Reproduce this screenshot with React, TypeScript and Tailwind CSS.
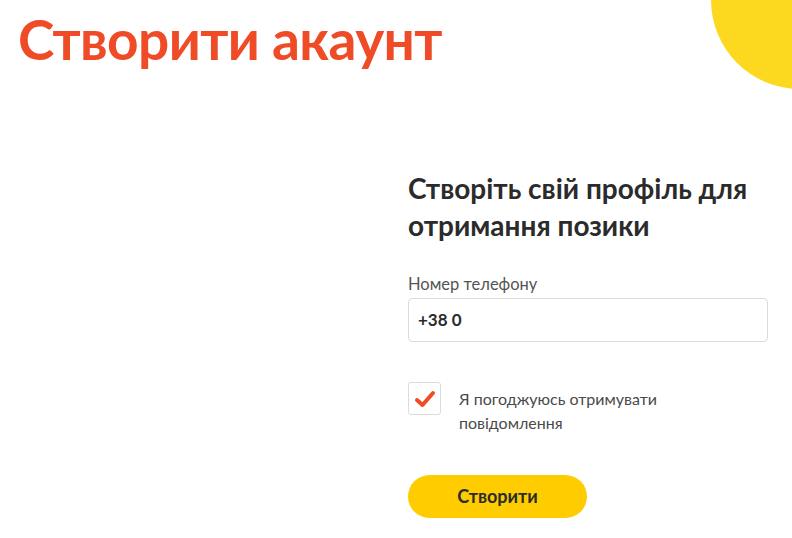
export default function App() {
  return (
    <div
      className="relative w-[792px] h-[538px] overflow-hidden bg-white"
      style={{ fontFamily: "Lato, 'Noto Sans', sans-serif" }}
    >
      {/* Декоративне коло */}
      <div className="absolute left-[711px] top-[-89px] w-[178px] h-[178px] rounded-full bg-[#fcd91f]" />

      <h1 className="pl-[18px] pt-[8px] text-[55px] leading-[62px] font-bold tracking-[-0.6px] text-[#ee4b26]">
        Створити акаунт
      </h1>

      <div className="flex">
        <div className="w-[408px] shrink-0" />
        <div className="w-[360px] pt-[100px]">
          <h2 className="text-[28px] leading-[37px] font-bold text-[#2b2b2b]">
            Створіть свій профіль для отримання позики
          </h2>

          <label className="block mt-[30px] text-[16.5px] leading-[20px] text-[#555]">
            Номер телефону
          </label>
          <div className="mt-[4px] h-[44px] flex items-center px-[9px] rounded-[4px] border border-[#dcdcdc] text-[17px] font-bold text-[#2b2b2b]">
            +38 0
          </div>

          <div className="mt-[40px] flex items-start">
            <div className="w-[33px] h-[33px] shrink-0 flex items-center justify-center rounded-[3px] border border-[#dcdcdc]">
              <svg width="22" height="18" viewBox="0 0 22 18" fill="none">
                <path
                  d="M3 10 L8.5 15 L19 3"
                  stroke="#ee4b26"
                  strokeWidth="4"
                  strokeLinecap="round"
                  strokeLinejoin="round"
                />
              </svg>
            </div>
            <p className="ml-[18px] mt-[5px] text-[16px] leading-[24px] text-[#4a4a4a]">
              Я погоджуюсь отримувати
              <br />
              повідомлення
            </p>
          </div>

          <button className="mt-[40px] w-[179px] h-[43px] rounded-full bg-[#ffcc00] text-[18px] font-bold text-[#2b2b2b]">
            Створити
          </button>
        </div>
      </div>
    </div>
  );
}
